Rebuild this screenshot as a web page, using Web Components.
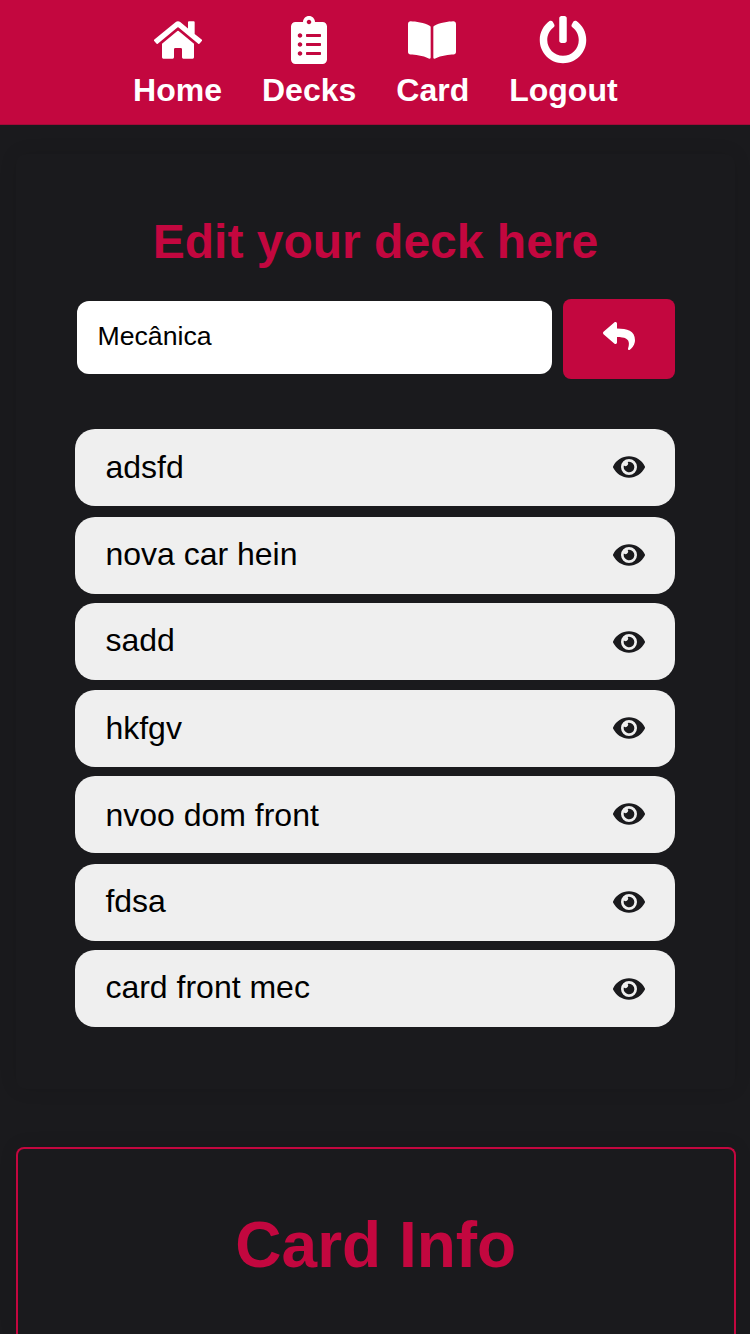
<!DOCTYPE html>
<html lang="en">
<head>
<meta charset="utf-8">
<title>Edit deck</title>
<style>
html{background:#1a1a1d}
body{margin:0;height:1334px;overflow:hidden;font-family:"Liberation Sans",Arial,sans-serif;--accent:#c3073f;--dark:#1a1a1d}
</style>
</head>
<body>
<deck-page></deck-page>
<script>
const ICONS = {
  home: ['0 0 576 512', 'M280.37 148.26L96 300.11V464a16 16 0 0 0 16 16l112.06-.29a16 16 0 0 0 15.92-16V368a16 16 0 0 1 16-16h64a16 16 0 0 1 16 16v95.64a16 16 0 0 0 16 16.05L464 480a16 16 0 0 0 16-16V300L295.67 148.26a12.19 12.19 0 0 0-15.3 0zM571.6 251.47L488 182.56V44.05a12 12 0 0 0-12-12h-56a12 12 0 0 0-12 12v72.61L318.47 43a48 48 0 0 0-61 0L4.34 251.47a12 12 0 0 0-1.6 16.9l25.5 31A12 12 0 0 0 45.15 301l235.22-193.74a12.19 12.19 0 0 1 15.3 0L530.9 301a12 12 0 0 0 16.9-1.6l25.5-31a12 12 0 0 0-1.7-16.93z'],
  list: ['0 0 384 512', 'M336 64h-80c0-35.3-28.7-64-64-64s-64 28.7-64 64H48C21.5 64 0 85.5 0 112v352c0 26.5 21.5 48 48 48h288c26.5 0 48-21.5 48-48V112c0-26.5-21.5-48-48-48zM96 424c-13.3 0-24-10.7-24-24s10.7-24 24-24 24 10.7 24 24-10.7 24-24 24zm0-96c-13.3 0-24-10.7-24-24s10.7-24 24-24 24 10.7 24 24-10.7 24-24 24zm0-96c-13.3 0-24-10.7-24-24s10.7-24 24-24 24 10.7 24 24-10.7 24-24 24zm96-192c13.3 0 24 10.7 24 24s-10.7 24-24 24-24-10.7-24-24 10.7-24 24-24zm128 368c0 4.4-3.6 8-8 8H168c-4.4 0-8-3.6-8-8v-16c0-4.4 3.6-8 8-8h144c4.4 0 8 3.6 8 8v16zm0-96c0 4.4-3.6 8-8 8H168c-4.4 0-8-3.6-8-8v-16c0-4.4 3.6-8 8-8h144c4.4 0 8 3.6 8 8v16zm0-96c0 4.4-3.6 8-8 8H168c-4.4 0-8-3.6-8-8v-16c0-4.4 3.6-8 8-8h144c4.4 0 8 3.6 8 8v16z'],
  book: ['0 0 576 512', 'M542.22 32.05c-54.8 3.11-163.72 14.43-230.96 55.59-4.64 2.84-7.27 7.89-7.27 13.17v363.87c0 11.55 12.63 18.85 23.28 13.49 69.18-34.82 169.23-44.32 218.7-46.92 16.89-.89 30.02-14.43 30.02-30.66V62.75c.01-17.71-15.35-31.74-33.77-30.7zM264.73 87.64C197.5 46.48 88.58 35.17 33.78 32.05 15.36 31.01 0 45.04 0 62.75V400.6c0 16.24 13.13 29.78 30.02 30.66 49.49 2.6 149.59 12.11 218.77 46.95 10.62 5.35 23.21-1.94 23.21-13.46V100.63c0-5.29-2.62-10.14-7.27-12.99z'],
  power: ['0 0 512 512', 'M400 54.1c63 45 104 118.6 104 201.9 0 136.8-110.8 247.7-247.5 248C120 504.3 8.2 393 8 256.4 7.9 173.1 48.9 99.3 111.8 54.2c11.7-8.3 28-4.8 35 7.7L162.6 90c5.9 10.5 3.1 23.8-6.6 31-41.5 30.8-68 79.6-68 134.9-.1 92.3 74.5 168.1 168 168.1 91.6 0 168.6-74.2 168-169.1-.3-51.8-24.7-101.8-68.1-134-9.7-7.2-12.4-20.5-6.5-30.9l15.8-28.1c7-12.4 23.2-16.1 34.8-7.8zM296 264V24c0-13.3-10.7-24-24-24h-32c-13.3 0-24 10.7-24 24v240c0 13.3 10.7 24 24 24h32c13.3 0 24-10.7 24-24z'],
  reply: ['0 0 512 512', 'M8.309 189.836L184.313 37.851C199.719 24.546 224 35.347 224 56.015v80.053c160.629 1.839 288 34.032 288 186.258 0 61.441-39.581 122.309-83.333 154.132-13.653 9.931-33.111-2.533-28.077-18.631 45.344-145.012-21.507-183.51-176.59-185.742V360c0 20.7-24.3 31.453-39.687 18.164l-176.004-152c-11.071-9.562-11.086-26.753 0-36.328z'],
  eye: ['0 0 576 512', 'M572.52 241.4C518.29 135.59 410.93 64 288 64S57.68 135.64 3.48 241.41a32.35 32.35 0 0 0 0 29.19C57.71 376.41 165.07 448 288 448s230.32-71.64 284.52-177.41a32.35 32.35 0 0 0 0-29.19zM288 400a144 144 0 1 1 144-144 143.93 143.93 0 0 1-144 144zm0-240a95.31 95.31 0 0 0-25.31 3.79 47.85 47.85 0 0 1-66.9 66.9A95.78 95.78 0 1 0 288 160z']
};
function define(name, html) {
  customElements.define(name, class extends HTMLElement {
    connectedCallback() {
      if (this.shadowRoot) return;
      this.attachShadow({mode: 'open'}).innerHTML = typeof html === 'function' ? html(this) : html;
    }
  });
}
define('ui-icon', el => {
  const [box, d] = ICONS[el.getAttribute('name')];
  return `<style>:host{display:block;width:var(--icon-size,48px);height:var(--icon-size,48px)}svg{display:block;width:100%;height:100%}</style><svg viewBox="${box}" fill="currentColor"><path d="${d}"/></svg>`;
});
define('nav-item', el => `<style>
:host{display:flex;flex-direction:column;align-items:center;color:#fff;font-weight:bold;font-size:32px;line-height:36px}
ui-icon{margin-right:var(--icon-nudge,0px)}
span{margin-top:8px}</style><ui-icon name="${el.getAttribute('icon')}"></ui-icon><span><slot></slot></span>`);
define('nav-bar', `<style>:host{display:flex;justify-content:center;gap:40px;height:125px;padding:16px 0 0 .7px;box-sizing:border-box;background:var(--accent);border-bottom:1px solid #a10b38}</style><slot></slot>`);
define('deck-panel', `<style>
:host{display:block;margin:29px 15px 0 16px;height:935px;padding:61px 59px 0;box-sizing:border-box;border-radius:10px;box-shadow:0 0 18px rgba(0,0,0,.1)}
h2{margin:0;text-align:center;color:var(--accent);font-size:48px;line-height:54px}
.form{display:flex;align-items:flex-start;margin-top:30px}
.field{flex:none;box-sizing:border-box;width:475px;height:73px;margin:2px 11px 0 2px;padding:0 20.5px;border-radius:12px;background:#fff;color:#000;font-size:26.67px;line-height:71px}
.back{flex:none;width:112px;height:80px;border-radius:8px;background:var(--accent);color:#fff;display:flex;justify-content:center;align-items:flex-start;--icon-size:32px}
.back ui-icon{margin-top:21px}
.list{display:flex;flex-direction:column;width:600px;margin-top:50px}
</style><h2>Edit your deck here</h2><div class="form"><div class="field">Mecânica</div><div class="back"><ui-icon name="reply"></ui-icon></div></div><div class="list"><slot></slot></div>`);
define('card-row', `<style>
:host{display:flex;justify-content:space-between;align-items:flex-start;box-sizing:border-box;height:76.6px;margin-bottom:10px;padding:0 30px;border-radius:20px;background:#efefef;color:#000;font-size:32px;line-height:36px}
span{margin-top:var(--label-top,19px);margin-left:.4px}
ui-icon{--icon-size:32px;margin-top:var(--eye-top,22.4px);color:var(--dark)}
</style><span><slot></slot></span><ui-icon name="eye"></ui-icon>`);
define('info-panel', `<style>
:host{display:block;box-sizing:border-box;height:187px;margin:58px 14px 0 16px;padding-top:60px;border:2px solid var(--accent);border-bottom:0;border-radius:8px 8px 0 0;box-shadow:0 0 18px rgba(0,0,0,.1);text-align:center}
h1{margin:0 .5px 0 0;color:var(--accent);font-size:64px;line-height:72px}
</style><h1><slot></slot></h1>`);
define('deck-page', `<style>:host{display:block}
nav-item[icon=book],nav-item[icon=power]{--icon-nudge:1px}
card-row{margin-bottom:9.4px}
card-row:nth-child(1),card-row:nth-child(5){margin-bottom:11.4px}
card-row:nth-child(3){margin-bottom:10.4px}
card-row:nth-child(1),card-row:nth-child(4){--label-top:20px}
card-row:nth-child(5){--label-top:21px}
card-row:nth-child(3),card-row:nth-child(7){--eye-top:23px}</style>
<nav-bar><nav-item icon="home">Home</nav-item><nav-item icon="list">Decks</nav-item><nav-item icon="book">Card</nav-item><nav-item icon="power">Logout</nav-item></nav-bar>
<deck-panel><card-row>adsfd</card-row><card-row>nova car hein</card-row><card-row>sadd</card-row><card-row>hkfgv</card-row><card-row>nvoo dom front</card-row><card-row>fdsa</card-row><card-row>card front mec</card-row></deck-panel>
<info-panel>Card Info</info-panel>`);
</script>
</body>
</html>
